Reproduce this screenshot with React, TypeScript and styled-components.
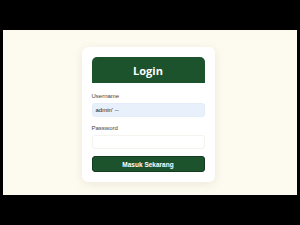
import React from "react";
import styled, { createGlobalStyle } from "styled-components";

const Global = createGlobalStyle`
  html, body { margin: 0; padding: 0; background: #000; }
  body { font-family: "Liberation Sans", Arial, sans-serif; }
`;

const Frame = styled.div`
  width: 300px;
  height: 225px;
  background: #000;
  padding: 30px 3px 30px 3px;
  box-sizing: border-box;
`;

const Stage = styled.div`
  height: 100%;
  background: #fdfaef;
  display: flex;
  justify-content: center;
  align-items: flex-start;
  padding-top: 17px;
  box-sizing: border-box;
`;

const Card = styled.div`
  width: 133px;
  box-sizing: border-box;
  background: #fff;
  border-radius: 6px;
  padding: 10px 10px 10px;
  box-shadow: 0 2px 10px rgba(120, 110, 80, 0.12);
  margin-left: -4px;
`;

const Header = styled.div`
  height: 26px;
  background: #1c532d;
  border-radius: 5px 5px 0 0;
  display: flex;
  align-items: center;
  justify-content: center;
  color: #fff;
  font-family: "Open Sans", "Liberation Sans", sans-serif;
  font-weight: 700;
  font-size: 11px;
  padding-top: 1px;
  box-sizing: border-box;
`;

const Label = styled.div<{ $top: number }>`
  margin-top: ${(p) => p.$top}px;
  font-size: 6px;
  color: #3f3f3f;
  height: 8px;
  line-height: 8px;
`;

const Input = styled.div<{ $filled?: boolean }>`
  margin-top: 3px;
  height: 14px;
  box-sizing: border-box;
  border-radius: 3px;
  background: ${(p) => (p.$filled ? "#e8f0fb" : "#fff")};
  border: 1px solid ${(p) => (p.$filled ? "#e3ecf7" : "#f5f3ee")};
  padding-left: 3px;
  font-size: 6px;
  color: #222;
  display: flex;
  align-items: center;
`;

const Button = styled.div`
  margin-top: 7px;
  height: 16px;
  background: #1c532d;
  border: 1px solid #123a1f;
  box-sizing: border-box;
  border-radius: 3px;
  color: #fff;
  font-weight: 700;
  font-size: 6.5px;
  display: flex;
  align-items: center;
  justify-content: center;
`;

export default function App() {
  return (
    <>
      <Global />
      <Frame>
        <Stage>
          <Card>
            <Header>Login</Header>
            <Label $top={9}>Username</Label>
            <Input $filled>admin' --</Input>
            <Label $top={7}>Password</Label>
            <Input />
            <Button>Masuk Sekarang</Button>
          </Card>
        </Stage>
      </Frame>
    </>
  );
}
